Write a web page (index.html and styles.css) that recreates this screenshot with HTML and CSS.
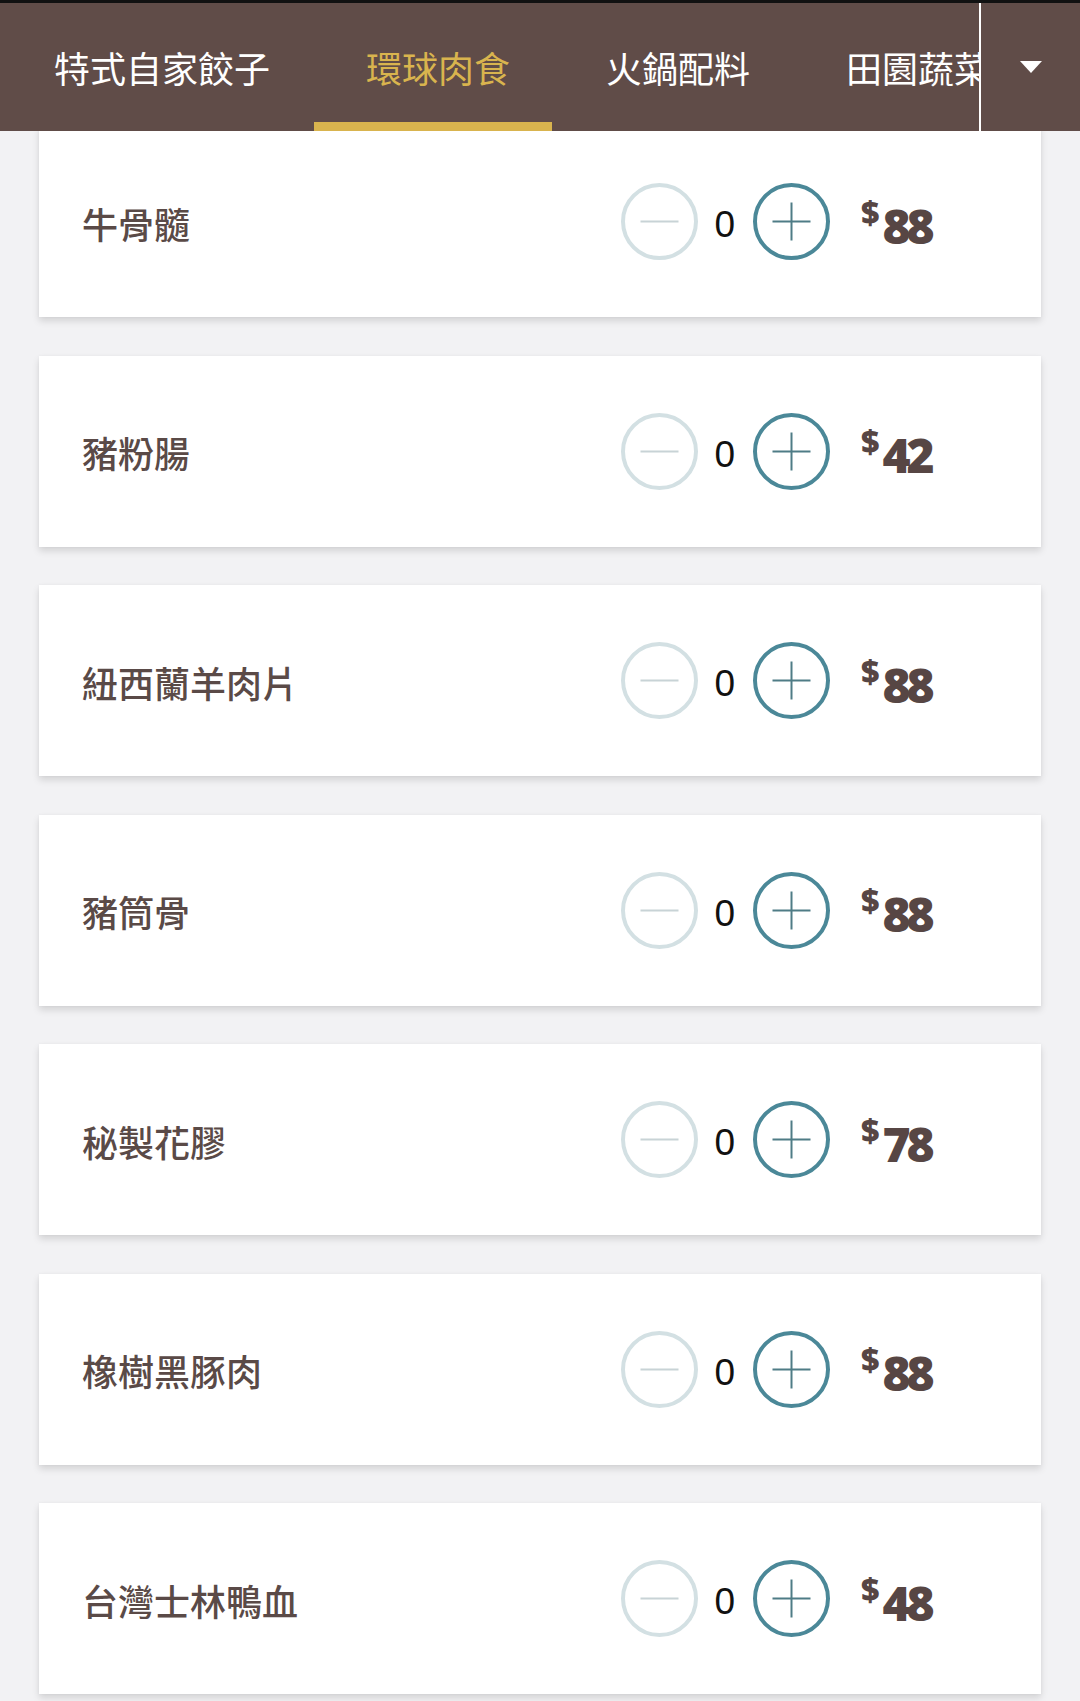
FILE: index.html
```html
<!DOCTYPE html>
<html lang="zh-Hant">
<head>
<meta charset="utf-8">
<title>環球肉食</title>
<link rel="stylesheet" href="styles.css">
</head>
<body>
<header class="topbar">
  <nav class="tabs">
    <div class="tab">特式自家餃子</div>
    <div class="tab active">環球肉食</div>
    <div class="tab">火鍋配料</div>
    <div class="tab">田園蔬菜</div>
  </nav>
  <div class="tab-more"><span class="caret"></span></div>
</header>

<main class="list">
  <div class="card">
    <div class="name">牛骨髓</div>
    <div class="qty">
      <svg class="btn" viewBox="0 0 77 77"><circle cx="38.5" cy="38.5" r="36.5" class="c-minus"/><line x1="19.5" y1="38.5" x2="57.5" y2="38.5" class="l-minus"/></svg>
      <span class="count">0</span>
      <svg class="btn" viewBox="0 0 77 77"><circle cx="38.5" cy="38.5" r="36.5" class="c-plus"/><line x1="19.5" y1="38.5" x2="57.5" y2="38.5" class="l-plus"/><line x1="38.5" y1="19.5" x2="38.5" y2="57.5" class="l-plus"/></svg>
    </div>
    <div class="price"><span class="cur">$</span><span class="amt">88</span></div>
  </div>

  <div class="card">
    <div class="name">豬粉腸</div>
    <div class="qty">
      <svg class="btn" viewBox="0 0 77 77"><circle cx="38.5" cy="38.5" r="36.5" class="c-minus"/><line x1="19.5" y1="38.5" x2="57.5" y2="38.5" class="l-minus"/></svg>
      <span class="count">0</span>
      <svg class="btn" viewBox="0 0 77 77"><circle cx="38.5" cy="38.5" r="36.5" class="c-plus"/><line x1="19.5" y1="38.5" x2="57.5" y2="38.5" class="l-plus"/><line x1="38.5" y1="19.5" x2="38.5" y2="57.5" class="l-plus"/></svg>
    </div>
    <div class="price"><span class="cur">$</span><span class="amt">42</span></div>
  </div>

  <div class="card">
    <div class="name">紐西蘭羊肉片</div>
    <div class="qty">
      <svg class="btn" viewBox="0 0 77 77"><circle cx="38.5" cy="38.5" r="36.5" class="c-minus"/><line x1="19.5" y1="38.5" x2="57.5" y2="38.5" class="l-minus"/></svg>
      <span class="count">0</span>
      <svg class="btn" viewBox="0 0 77 77"><circle cx="38.5" cy="38.5" r="36.5" class="c-plus"/><line x1="19.5" y1="38.5" x2="57.5" y2="38.5" class="l-plus"/><line x1="38.5" y1="19.5" x2="38.5" y2="57.5" class="l-plus"/></svg>
    </div>
    <div class="price"><span class="cur">$</span><span class="amt">88</span></div>
  </div>

  <div class="card">
    <div class="name">豬筒骨</div>
    <div class="qty">
      <svg class="btn" viewBox="0 0 77 77"><circle cx="38.5" cy="38.5" r="36.5" class="c-minus"/><line x1="19.5" y1="38.5" x2="57.5" y2="38.5" class="l-minus"/></svg>
      <span class="count">0</span>
      <svg class="btn" viewBox="0 0 77 77"><circle cx="38.5" cy="38.5" r="36.5" class="c-plus"/><line x1="19.5" y1="38.5" x2="57.5" y2="38.5" class="l-plus"/><line x1="38.5" y1="19.5" x2="38.5" y2="57.5" class="l-plus"/></svg>
    </div>
    <div class="price"><span class="cur">$</span><span class="amt">88</span></div>
  </div>

  <div class="card">
    <div class="name">秘製花膠</div>
    <div class="qty">
      <svg class="btn" viewBox="0 0 77 77"><circle cx="38.5" cy="38.5" r="36.5" class="c-minus"/><line x1="19.5" y1="38.5" x2="57.5" y2="38.5" class="l-minus"/></svg>
      <span class="count">0</span>
      <svg class="btn" viewBox="0 0 77 77"><circle cx="38.5" cy="38.5" r="36.5" class="c-plus"/><line x1="19.5" y1="38.5" x2="57.5" y2="38.5" class="l-plus"/><line x1="38.5" y1="19.5" x2="38.5" y2="57.5" class="l-plus"/></svg>
    </div>
    <div class="price"><span class="cur">$</span><span class="amt">78</span></div>
  </div>

  <div class="card">
    <div class="name">橡樹黑豚肉</div>
    <div class="qty">
      <svg class="btn" viewBox="0 0 77 77"><circle cx="38.5" cy="38.5" r="36.5" class="c-minus"/><line x1="19.5" y1="38.5" x2="57.5" y2="38.5" class="l-minus"/></svg>
      <span class="count">0</span>
      <svg class="btn" viewBox="0 0 77 77"><circle cx="38.5" cy="38.5" r="36.5" class="c-plus"/><line x1="19.5" y1="38.5" x2="57.5" y2="38.5" class="l-plus"/><line x1="38.5" y1="19.5" x2="38.5" y2="57.5" class="l-plus"/></svg>
    </div>
    <div class="price"><span class="cur">$</span><span class="amt">88</span></div>
  </div>

  <div class="card">
    <div class="name">台灣士林鴨血</div>
    <div class="qty">
      <svg class="btn" viewBox="0 0 77 77"><circle cx="38.5" cy="38.5" r="36.5" class="c-minus"/><line x1="19.5" y1="38.5" x2="57.5" y2="38.5" class="l-minus"/></svg>
      <span class="count">0</span>
      <svg class="btn" viewBox="0 0 77 77"><circle cx="38.5" cy="38.5" r="36.5" class="c-plus"/><line x1="19.5" y1="38.5" x2="57.5" y2="38.5" class="l-plus"/><line x1="38.5" y1="19.5" x2="38.5" y2="57.5" class="l-plus"/></svg>
    </div>
    <div class="price"><span class="cur">$</span><span class="amt">48</span></div>
  </div>
</main>
</body>
</html>
```

FILE: styles.css
```css
* { box-sizing: border-box; }

html, body {
  margin: 0;
  padding: 0;
}

body {
  background: #f2f2f4;
  font-family: "Noto Sans CJK TC", "Noto Sans", sans-serif;
  height: 1701px;
  overflow: hidden;
}

.topbar {
  position: fixed;
  top: 0;
  left: 0;
  right: 0;
  height: 131px;
  border-top: 3px solid #111;
  background: #604c48;
  display: flex;
  z-index: 10;
}

.tabs {
  flex: 1;
  display: flex;
  overflow: hidden;
  padding-left: 6px;
  white-space: nowrap;
}

.tab {
  flex: none;
  position: relative;
  padding: 0 48px;
  font-size: 36px;
  font-weight: 400;
  line-height: 128px;
  color: #ffffff;
}

.tab.active {
  color: #d9b44e;
}

.tab.active::after {
  content: "";
  position: absolute;
  left: -4px;
  right: 6px;
  bottom: 0;
  height: 9px;
  background: #d9b44e;
}

.tab-more {
  flex: none;
  width: 101px;
  border-left: 2px solid #ffffff;
  display: flex;
  align-items: center;
  justify-content: center;
}

.caret {
  width: 0;
  height: 0;
  border-left: 11px solid transparent;
  border-right: 11px solid transparent;
  border-top: 12px solid #ffffff;
}

.list {
  display: flex;
  flex-direction: column;
  gap: 38.5px;
  padding: 126px 39px 0;
}

.card {
  flex: none;
  height: 191px;
  background: #ffffff;
  display: flex;
  align-items: center;
  padding: 0 100px 0 43px;
  box-shadow: 0 4px 7px rgba(0, 0, 0, 0.13), 0 0 3px rgba(0, 0, 0, 0.04);
}

.name {
  flex: 1;
  font-size: 36px;
  font-weight: 500;
  color: #5a4a47;
  padding-top: 2px;
}

.qty {
  display: flex;
  align-items: center;
}

.btn {
  width: 77px;
  height: 77px;
  display: block;
}

.c-minus {
  fill: none;
  stroke: #d3e0e3;
  stroke-width: 4;
}

.l-minus {
  stroke: #c8d3d6;
  stroke-width: 2;
}

.c-plus {
  fill: none;
  stroke: #4b8898;
  stroke-width: 4;
}

.l-plus {
  stroke: #4f7c86;
  stroke-width: 2;
}

.count {
  font-family: "Liberation Sans", Arial, sans-serif;
  font-size: 37px;
  color: #111111;
  margin: 0 18px 0 16px;
  padding-top: 6px;
  line-height: 1;
}

.price {
  margin-left: 31px;
  width: 80px;
  display: flex;
  align-items: flex-start;
  color: #574644;
  font-family: "Open Sans", Roboto, sans-serif;
  padding-top: 8px;
}

.cur {
  font-size: 32px;
  font-weight: 800;
  line-height: 1;
  margin-right: 3px;
  margin-top: -6px;
}

.amt {
  font-size: 48px;
  font-weight: 800;
  line-height: 1;
  letter-spacing: -4px;
}
```
